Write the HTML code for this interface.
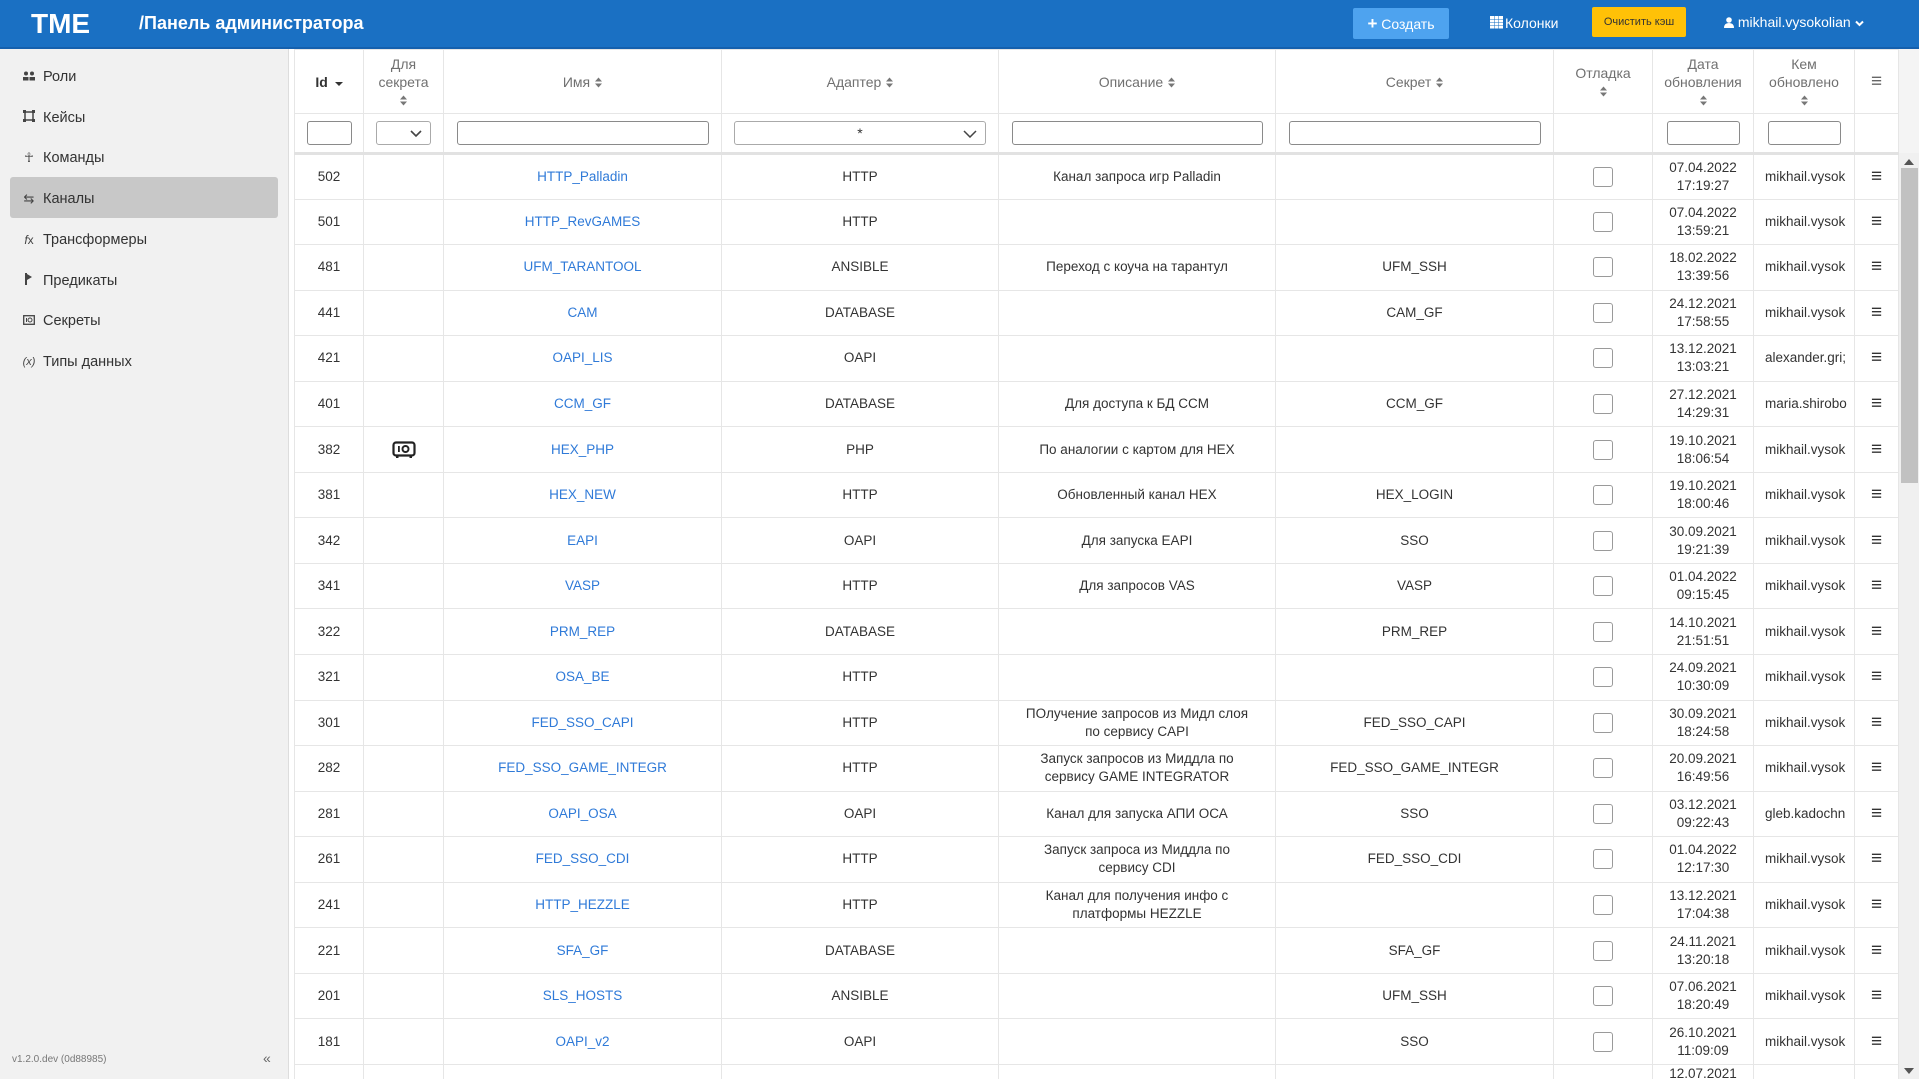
<!DOCTYPE html>
<html style="overflow:hidden;height:1079px"><head><meta charset="utf-8"><style>
*{box-sizing:border-box;margin:0;padding:0}
body{width:1919px;height:1079px;overflow:hidden;background:#fff;font-family:"Liberation Sans","DejaVu Sans",sans-serif;color:#333}
#wrap{position:relative;width:1919px;height:1079px;overflow:hidden}
.top{position:absolute;left:0;top:0;width:1919px;height:49px;background:#1a70c3;border-bottom:2px solid #1560ad}
.logo{position:absolute;left:31px;top:8px;font-size:28px;font-weight:bold;color:#fff}
.title{position:absolute;left:139px;top:13px;font-size:18px;font-weight:bold;color:#fff}
.btn{position:absolute;color:#fff;font-size:14px}
.side{position:absolute;left:0;top:49px;width:289px;height:1030px;background:#f1f1f1;border-right:1px solid #ddd}
.it{position:absolute;left:0;width:289px;height:40px;font-size:14.5px;color:#333;line-height:40px}
.it .ic{position:absolute;left:21px;width:16px;text-align:center;font-size:13px;color:#444}
.it .tx{position:absolute;left:43px}
.sel{position:absolute;left:10px;top:128px;width:268px;height:41px;background:#c8c8c8;border-radius:3px}
table{position:absolute;left:294px;top:49px;width:1604px;border-collapse:collapse;table-layout:fixed;font-size:13.5px}
td,th{border:1px solid #e6e6e6;text-align:center;vertical-align:middle;overflow:hidden;white-space:nowrap;line-height:18px}
th{height:64px;color:#707070;font-weight:normal;font-size:14px;white-space:normal}
tr.f td{height:40px;border-bottom:3px solid #e2e2e2}
tr.r td{height:45.56px}
.inp{display:inline-block;height:24px;border:1px solid #8a8a8a;border-radius:3px;vertical-align:middle;background:#fff;position:relative}
a{color:#2f7ad8;text-decoration:none}
.cb{display:inline-block;width:20px;height:20px;border:1px solid #9a9a9a;border-radius:3px;vertical-align:middle}
.mn{font-weight:bold;font-size:19px;color:#333}
.s{display:inline-block;width:7px;height:11px;vertical-align:middle;margin-left:5px}
</style></head><body><div id="wrap">
<div class="top">
<div class="logo">TME</div>
<div class="title">/Панель администратора</div>
<div class="btn" style="left:1353px;top:8px;width:96px;height:31px;background:#4ea3ef;border-radius:2px;line-height:31px;text-align:center;font-size:14px"><b style="font-size:17px">+</b> Создать</div>
<div class="btn" style="left:1490px;top:15px;font-size:14px"><svg width="13" height="13" style="vertical-align:-1px;margin-right:2px"><g fill="#fff"><rect x="0" y="0" width="4" height="3"/><rect x="4.5" y="0" width="4" height="3"/><rect x="9" y="0" width="4" height="3"/><rect x="0" y="3.5" width="4" height="2.5"/><rect x="4.5" y="3.5" width="4" height="2.5"/><rect x="9" y="3.5" width="4" height="2.5"/><rect x="0" y="6.5" width="4" height="2.5"/><rect x="4.5" y="6.5" width="4" height="2.5"/><rect x="9" y="6.5" width="4" height="2.5"/><rect x="0" y="9.5" width="4" height="3"/><rect x="4.5" y="9.5" width="4" height="3"/><rect x="9" y="9.5" width="4" height="3"/></g></svg>Колонки</div>
<div class="btn" style="left:1592px;top:7px;width:94px;height:30px;background:#ffc107;border-radius:2px;line-height:30px;text-align:center;font-size:11px;color:#333">Очистить кэш</div>
<div class="btn" style="left:1724px;top:14px;font-size:14px"><svg width="10" height="11" style="vertical-align:-1px"><circle cx="5" cy="3" r="2.8" fill="#fff"/><path d="M0 11 Q0 6 5 6 Q10 6 10 11Z" fill="#fff"/></svg> mikhail.vysokolian <svg width="9" height="7"><path d="M1 1.5 L4.5 5 L8 1.5" stroke="#fff" stroke-width="2" fill="none"/></svg></div>
</div>
<div class="side">
<div class="sel"></div>
<div class="it" style="top:8px"><span class="ic"><svg width="12" height="10"><circle cx="3" cy="2.5" r="2" fill="#444"/><circle cx="9" cy="2.5" r="2" fill="#444"/><rect x="0" y="6" width="5.5" height="3.5" fill="#444"/><rect x="6.5" y="6" width="5.5" height="3.5" fill="#444"/></svg></span><span class="tx">Роли</span></div>
<div class="it" style="top:49px"><span class="ic"><svg width="12" height="12"><rect x="2" y="2" width="8" height="8" fill="none" stroke="#444" stroke-width="1.5"/><rect x="0" y="0" width="3" height="3" fill="#444"/><rect x="9" y="0" width="3" height="3" fill="#444"/><rect x="0" y="9" width="3" height="3" fill="#444"/><rect x="9" y="9" width="3" height="3" fill="#444"/></svg></span><span class="tx">Кейсы</span></div>
<div class="it" style="top:89px"><span class="ic">&#x2625;</span><span class="tx">Команды</span></div>
<div class="it" style="top:130px"><span class="ic">&#x21C6;</span><span class="tx">Каналы</span></div>
<div class="it" style="top:171px"><span class="ic" style="font-size:12px"><i>f</i>x</span><span class="tx">Трансформеры</span></div>
<div class="it" style="top:212px"><span class="ic"><svg width="8" height="12"><rect x="0" y="0" width="2" height="12" fill="#444"/><path d="M2 1 L7 4 L2 7Z" fill="#444"/></svg></span><span class="tx">Предикаты</span></div>
<div class="it" style="top:252px"><span class="ic"><svg width="12" height="10"><rect x="0.7" y="0.7" width="10.6" height="8.6" fill="none" stroke="#444" stroke-width="1.3"/><circle cx="7" cy="5" r="2" fill="none" stroke="#444"/><rect x="3" y="3" width="1" height="4" fill="#444"/></svg></span><span class="tx">Секреты</span></div>
<div class="it" style="top:293px"><span class="ic" style="font-size:11px"><i>(x)</i></span><span class="tx">Типы данных</span></div>
<div style="position:absolute;left:12px;top:1005px;font-size:10px;color:#777">v1.2.0.dev (0d88985)</div>
<div style="position:absolute;left:263px;top:1001px;font-size:14px;color:#666">«</div>
</div>
<svg width="0" height="0" style="position:absolute"><defs><g id="so"><path d="M0 4.5 L3.5 0.5 L7 4.5Z M0 6.5 L3.5 10.5 L7 6.5Z" fill="#777"/></g></defs></svg>
<table>
<colgroup><col style="width:69px"><col style="width:80px"><col style="width:278px"><col style="width:277px"><col style="width:277px"><col style="width:278px"><col style="width:99px"><col style="width:101px"><col style="width:101px"><col style="width:44px"></colgroup>
<tr>
<th style="color:#333;font-weight:bold">Id <svg width="8" height="6" style="margin-left:3px"><path d="M0 1 L4 5 L8 1Z" fill="#333"/></svg></th>
<th>Для<br>секрета<br><svg class="s" style="margin:0"><use href="#so"/></svg></th>
<th>Имя<svg class="s"><use href="#so"/></svg></th>
<th>Адаптер<svg class="s"><use href="#so"/></svg></th>
<th>Описание<svg class="s"><use href="#so"/></svg></th>
<th>Секрет<svg class="s"><use href="#so"/></svg></th>
<th>Отладка<br><svg class="s" style="margin:0"><use href="#so"/></svg></th>
<th>Дата<br>обновления<br><svg class="s" style="margin:0"><use href="#so"/></svg></th>
<th>Кем<br>обновлено<br><svg class="s" style="margin:0"><use href="#so"/></svg></th>
<th><span class="mn" style="color:#666">&#8801;</span></th>
</tr>
<tr class="f">
<td><span class="inp" style="width:45px"></span></td>
<td><span class="inp" style="width:55px;border-color:#aaa"><svg width="12" height="8" style="position:absolute;right:8px;top:8px"><path d="M1 1 L6 6 L11 1" stroke="#444" stroke-width="1.6" fill="none"/></svg></span></td>
<td><span class="inp" style="width:252px"></span></td>
<td><span class="inp" style="width:252px;border-color:#aaa"><span style="position:absolute;left:0;right:0;top:2px;font-size:14px">*</span><svg width="14" height="8" style="position:absolute;right:8px;top:8px"><path d="M1 1 L7 7 L13 1" stroke="#444" stroke-width="1.5" fill="none"/></svg></span></td>
<td><span class="inp" style="width:251px"></span></td>
<td><span class="inp" style="width:252px"></span></td>
<td></td>
<td><span class="inp" style="width:73px"></span></td>
<td><span class="inp" style="width:73px"></span></td>
<td></td>
</tr>
<tr class="r"><td>502</td><td></td><td><a>HTTP_Palladin</a></td><td>HTTP</td><td>Канал запроса игр Palladin</td><td></td><td><span class="cb"></span></td><td>07.04.2022<br>17:19:27</td><td style="text-align:left;padding-left:11px">mikhail.vysok</td><td class="mn">&#8801;</td></tr>
<tr class="r"><td>501</td><td></td><td><a>HTTP_RevGAMES</a></td><td>HTTP</td><td></td><td></td><td><span class="cb"></span></td><td>07.04.2022<br>13:59:21</td><td style="text-align:left;padding-left:11px">mikhail.vysok</td><td class="mn">&#8801;</td></tr>
<tr class="r"><td>481</td><td></td><td><a>UFM_TARANTOOL</a></td><td>ANSIBLE</td><td>Переход с коуча на тарантул</td><td>UFM_SSH</td><td><span class="cb"></span></td><td>18.02.2022<br>13:39:56</td><td style="text-align:left;padding-left:11px">mikhail.vysok</td><td class="mn">&#8801;</td></tr>
<tr class="r"><td>441</td><td></td><td><a>CAM</a></td><td>DATABASE</td><td></td><td>CAM_GF</td><td><span class="cb"></span></td><td>24.12.2021<br>17:58:55</td><td style="text-align:left;padding-left:11px">mikhail.vysok</td><td class="mn">&#8801;</td></tr>
<tr class="r"><td>421</td><td></td><td><a>OAPI_LIS</a></td><td>OAPI</td><td></td><td></td><td><span class="cb"></span></td><td>13.12.2021<br>13:03:21</td><td style="text-align:left;padding-left:11px">alexander.gri;</td><td class="mn">&#8801;</td></tr>
<tr class="r"><td>401</td><td></td><td><a>CCM_GF</a></td><td>DATABASE</td><td>Для доступа к БД CCM</td><td>CCM_GF</td><td><span class="cb"></span></td><td>27.12.2021<br>14:29:31</td><td style="text-align:left;padding-left:11px">maria.shirobo</td><td class="mn">&#8801;</td></tr>
<tr class="r"><td>382</td><td><svg width="24" height="18" style="vertical-align:middle"><rect x="1.5" y="1.5" width="21" height="13" rx="2.5" fill="none" stroke="#222" stroke-width="2.2"/><rect x="6" y="5" width="1.8" height="6" fill="#222"/><circle cx="13.5" cy="8" r="3" fill="none" stroke="#222" stroke-width="2"/><rect x="4" y="14.5" width="2.5" height="2.5" fill="#222"/><rect x="17.5" y="14.5" width="2.5" height="2.5" fill="#222"/></svg></td><td><a>HEX_PHP</a></td><td>PHP</td><td>По аналогии с картом для HEX</td><td></td><td><span class="cb"></span></td><td>19.10.2021<br>18:06:54</td><td style="text-align:left;padding-left:11px">mikhail.vysok</td><td class="mn">&#8801;</td></tr>
<tr class="r"><td>381</td><td></td><td><a>HEX_NEW</a></td><td>HTTP</td><td>Обновленный канал HEX</td><td>HEX_LOGIN</td><td><span class="cb"></span></td><td>19.10.2021<br>18:00:46</td><td style="text-align:left;padding-left:11px">mikhail.vysok</td><td class="mn">&#8801;</td></tr>
<tr class="r"><td>342</td><td></td><td><a>EAPI</a></td><td>OAPI</td><td>Для запуска EAPI</td><td>SSO</td><td><span class="cb"></span></td><td>30.09.2021<br>19:21:39</td><td style="text-align:left;padding-left:11px">mikhail.vysok</td><td class="mn">&#8801;</td></tr>
<tr class="r"><td>341</td><td></td><td><a>VASP</a></td><td>HTTP</td><td>Для запросов VAS</td><td>VASP</td><td><span class="cb"></span></td><td>01.04.2022<br>09:15:45</td><td style="text-align:left;padding-left:11px">mikhail.vysok</td><td class="mn">&#8801;</td></tr>
<tr class="r"><td>322</td><td></td><td><a>PRM_REP</a></td><td>DATABASE</td><td></td><td>PRM_REP</td><td><span class="cb"></span></td><td>14.10.2021<br>21:51:51</td><td style="text-align:left;padding-left:11px">mikhail.vysok</td><td class="mn">&#8801;</td></tr>
<tr class="r"><td>321</td><td></td><td><a>OSA_BE</a></td><td>HTTP</td><td></td><td></td><td><span class="cb"></span></td><td>24.09.2021<br>10:30:09</td><td style="text-align:left;padding-left:11px">mikhail.vysok</td><td class="mn">&#8801;</td></tr>
<tr class="r"><td>301</td><td></td><td><a>FED_SSO_CAPI</a></td><td>HTTP</td><td>ПОлучение запросов из Мидл слоя<br>по сервису CAPI</td><td>FED_SSO_CAPI</td><td><span class="cb"></span></td><td>30.09.2021<br>18:24:58</td><td style="text-align:left;padding-left:11px">mikhail.vysok</td><td class="mn">&#8801;</td></tr>
<tr class="r"><td>282</td><td></td><td><a>FED_SSO_GAME_INTEGR</a></td><td>HTTP</td><td>Запуск запросов из Миддла по<br>сервису GAME INTEGRATOR</td><td>FED_SSO_GAME_INTEGR</td><td><span class="cb"></span></td><td>20.09.2021<br>16:49:56</td><td style="text-align:left;padding-left:11px">mikhail.vysok</td><td class="mn">&#8801;</td></tr>
<tr class="r"><td>281</td><td></td><td><a>OAPI_OSA</a></td><td>OAPI</td><td>Канал для запуска АПИ ОСА</td><td>SSO</td><td><span class="cb"></span></td><td>03.12.2021<br>09:22:43</td><td style="text-align:left;padding-left:11px">gleb.kadochn</td><td class="mn">&#8801;</td></tr>
<tr class="r"><td>261</td><td></td><td><a>FED_SSO_CDI</a></td><td>HTTP</td><td>Запуск запроса из Миддла по<br>сервису CDI</td><td>FED_SSO_CDI</td><td><span class="cb"></span></td><td>01.04.2022<br>12:17:30</td><td style="text-align:left;padding-left:11px">mikhail.vysok</td><td class="mn">&#8801;</td></tr>
<tr class="r"><td>241</td><td></td><td><a>HTTP_HEZZLE</a></td><td>HTTP</td><td>Канал для получения инфо с<br>платформы HEZZLE</td><td></td><td><span class="cb"></span></td><td>13.12.2021<br>17:04:38</td><td style="text-align:left;padding-left:11px">mikhail.vysok</td><td class="mn">&#8801;</td></tr>
<tr class="r"><td>221</td><td></td><td><a>SFA_GF</a></td><td>DATABASE</td><td></td><td>SFA_GF</td><td><span class="cb"></span></td><td>24.11.2021<br>13:20:18</td><td style="text-align:left;padding-left:11px">mikhail.vysok</td><td class="mn">&#8801;</td></tr>
<tr class="r"><td>201</td><td></td><td><a>SLS_HOSTS</a></td><td>ANSIBLE</td><td></td><td>UFM_SSH</td><td><span class="cb"></span></td><td>07.06.2021<br>18:20:49</td><td style="text-align:left;padding-left:11px">mikhail.vysok</td><td class="mn">&#8801;</td></tr>
<tr class="r"><td>181</td><td></td><td><a>OAPI_v2</a></td><td>OAPI</td><td></td><td>SSO</td><td><span class="cb"></span></td><td>26.10.2021<br>11:09:09</td><td style="text-align:left;padding-left:11px">mikhail.vysok</td><td class="mn">&#8801;</td></tr>
<tr class="r"><td></td><td></td><td></td><td></td><td></td><td></td><td></td><td style="vertical-align:top">12.07.2021</td><td></td><td></td></tr>
</table>
<div style="position:absolute;left:1899px;top:49px;width:20px;height:104px;background:#f4f4f4"></div>
<div style="position:absolute;left:1899px;top:153px;width:20px;height:926px;background:#f0f0f0">
<svg width="20" height="14" style="position:absolute;top:2px"><path d="M5 10 L10 4 L15 10Z" fill="#555"/></svg>
<div style="position:absolute;left:2px;top:15px;width:17px;height:315px;background:#c1c1c1"></div>
<svg width="20" height="14" style="position:absolute;top:912px"><path d="M5 3 L10 9 L15 3Z" fill="#555"/></svg>
</div>
</div></body></html>
